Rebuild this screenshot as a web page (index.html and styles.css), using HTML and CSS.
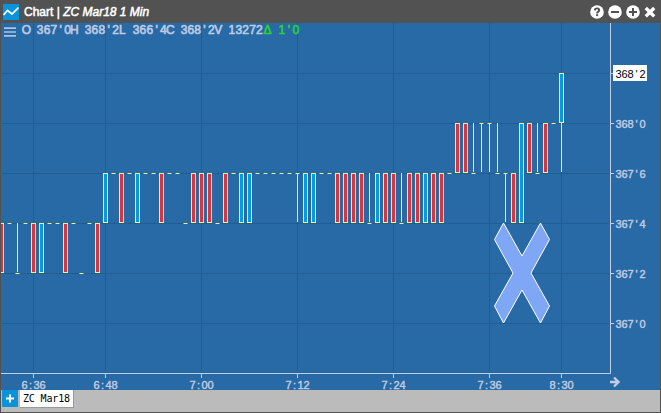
FILE: index.html
```html
<!DOCTYPE html>
<html lang="en">
<head>
<meta charset="utf-8">
<title>Chart</title>
<link rel="stylesheet" href="styles.css">
</head>
<body>
<div class="window">
  <header class="titlebar">
    <svg class="logo" width="16" height="16" viewBox="0 0 16 16"><rect width="16" height="16" fill="#0a93d8"/><path d="M.5 11 4.5 6.5l4.5 3.5 6.5-6.5" fill="none" stroke="#fff" stroke-width="1.7"/></svg>
    <h1 class="title">Chart | <em>ZC Mar18 1 Min</em></h1>
    <div class="controls">
      <svg width="14" height="14" viewBox="0 0 14 14"><circle cx="7" cy="7" r="6.8" fill="#fff"/><path d="M4.8 5.4C4.9 3.9 5.8 3.4 7 3.4c1.3 0 2.2.7 2.2 1.8C9.2 6.7 7.1 6.6 7.1 8.4" fill="none" stroke="#525252" stroke-width="1.9"/><rect x="6.1" y="9.2" width="2" height="1.9" fill="#525252"/></svg>
      <svg width="14" height="14" viewBox="0 0 14 14"><circle cx="7" cy="7" r="6.8" fill="#fff"/><path d="M3 7h8" stroke="#525252" stroke-width="2"/></svg>
      <svg width="14" height="14" viewBox="0 0 14 14"><circle cx="7" cy="7" r="6.8" fill="#fff"/><path d="M3 7h8M7 3v8" stroke="#525252" stroke-width="2"/></svg>
      <svg class="close" width="12" height="14" viewBox="0 0 12 14"><path d="m1.8 3 8.4 8.4M10.2 3l-8.4 8.4" stroke="#fff" stroke-width="3.4"/></svg>
    </div>
  </header>
  <main class="chart">
    <svg id="plot" width="659" height="367" viewBox="1 23 659 367"></svg>
  </main>
  <footer class="tabs">
    <button class="add" aria-label="Add"><svg width="16" height="17" viewBox="0 0 16 17"><path d="M4 8.5h8M8 4.5v8" stroke="#fff" stroke-width="2"/></svg></button>
    <div class="tab">ZC Mar18</div>
  </footer>
</div>
<script src="chart.js"></script>
</body>
</html>
```
FILE: styles.css
```css
* { box-sizing: border-box; }
body { margin: 0; background: #525252; font-family: "Liberation Sans", Arial, sans-serif; }
.window { width: 661px; height: 413px; display: flex; flex-direction: column; padding: 0 1px 1px; background: #525252; }
.titlebar { height: 23px; flex: none; display: flex; align-items: center; padding: 0 4px 0 2px; }
.logo { flex: none; }
.title { margin: 0 0 0 5px; font-size: 12px; line-height: 24px; font-weight: 400; color: #fff; white-space: pre; -webkit-text-stroke: .5px #fff; }
.controls { margin-left: auto; display: flex; gap: 4px; align-items: center; }
.controls svg { display: block; }
.chart { height: 367px; flex: none; background: #276aa5; }
.chart svg { display: block; }
.tabs { flex: 1; display: flex; align-items: flex-start; gap: 2px; padding-left: 1px; background: #bbb; }
.add { width: 16px; height: 17px; padding: 0; border: 0; background: #0a93d8; }
.add svg { display: block; }
.tab { height: 18px; width: 54px; padding-left: 3px; background: #fff; border-right: 1px solid #999; border-bottom: 1px solid #999; color: #000; font: 10px/17px "DejaVu Sans Mono", monospace; letter-spacing: -.15px; white-space: nowrap; }
.grid { stroke: #205d91; }
.axis { stroke: #c3cde6; fill: none; }
.candle { stroke: #f4f184; }
.up { fill: #0a9ada; }
.down { fill: #dc3539; }
.wick { stroke: #f4f184; fill: none; }
.soft { stroke: #f4f184; opacity: .5; }
.legend, .label { fill: #bfc9e2; stroke: #bfc9e2; text-anchor: middle; }
.legend { font-size: 12px; stroke-width: .65px; }
.label { font-size: 11px; stroke-width: .45px; }
.legend.change { fill: #2bcf35; stroke: #2bcf35; }
.last { fill: #000; font-size: 11px; text-anchor: middle; }
.tag { fill: #fff; }
.menu { stroke: #adc3df; stroke-width: 1.7px; }
.marker { fill: #80a7f6; stroke: #fff; }
```
FILE: chart.js
```js
const NS = 'http://www.w3.org/2000/svg';
const plot = document.getElementById('plot');

function add(name, attrs, text) {
  const el = document.createElementNS(NS, name);
  for (const key in attrs) el.setAttribute(key, attrs[key]);
  if (text) el.textContent = text;
  plot.appendChild(el);
  return el;
}

// Text set on fixed character cells.
function cells(text, x, y, step, cls) {
  const xs = [...text].map((c, i) => (x + (i + 0.5) * step).toFixed(2)).join(' ');
  add('text', { x: xs, y, class: cls, 'xml:space': 'preserve' }, text);
}

const times = [[33, '6:36'], [105, '6:48'], [201, '7:00'], [297, '7:12'], [393, '7:24'], [489, '7:36'], [561, '8:30']];
const prices = [[73, ''], [123, "368'0"], [173, "367'6"], [223, "367'4"], [273, "367'2"], [323, "367'0"]];

for (const [x] of times) add('path', { d: `M${x + .5} 23V373`, class: 'grid' });
for (const [y] of prices) add('path', { d: `M2 ${y + .5}H609`, class: 'grid' });
add('path', { d: 'M1 373.5H610.5V23', class: 'axis' });
for (const [x, t] of times) {
  add('path', { d: `M${x + .5} 374v4`, class: 'axis' });
  cells(t, x - 11.5, 389, 6, 'label');
}
for (const [y, t] of prices) {
  add('path', { d: `M611 ${y + .5}h3`, class: 'axis' });
  if (t) cells(t, 615.5, y + 5, 6, 'label');
}

// r/b/B: falling, rising and tall rising body, d: flat bar, t/l: wick with its tick at top/bottom.
const series = [
  [0, 223, 'rdldrbddrd'], [10, 273, 'd'], [11, 223, 'dr'],
  [13, 173, 'bdrdbddrdd'], [23, 223, 'd'], [24, 173, 'rrr'], [27, 223, 'd'],
  [28, 173, 'rdbbdddddtbbddrrrrlbrrlrrbrrd'],
  [57, 123, 'rrlttl'], [63, 173, 'tr'], [65, 123, 'Brlrd'], [70, 73, 'bw']
];
for (const [start, top, kinds] of series) {
  [...kinds].forEach((k, i) => {
    const x = 1 + 8 * (start + i);
    if ('rbB'.includes(k)) {
      add('rect', { x: x - 1.5, y: top + .5, width: 4, height: k === 'B' ? 99 : 49, class: 'candle ' + (k === 'r' ? 'down' : 'up') });
    } else if (k === 'w') {
      add('path', { d: `M${x - 7.5} 123V172`, class: 'wick' });
    } else {
      const y = k === 'l' ? top + 50.5 : top + .5;
      if (k !== 'd') add('path', { d: `M${x + .5} ${top}v49`, class: 'wick' });
      add('path', { d: `M${x - 2} ${y}h5`, class: 'soft' });
      add('path', { d: `M${x - 1} ${y}h3`, class: 'wick' });
    }
  });
}

add('polygon', { points: '503.5,223 522,256 540.5,223 549.5,239.5 531,273 549.5,306 540.5,323 522,290 503.5,323 494.5,306 513,273 494.5,239.5', class: 'marker' });
add('rect', { x: 613, y: 65, width: 34, height: 16, class: 'tag' });
cells("368'2", 615.5, 78, 6, 'last');
add('path', { d: 'M4 28.2h12M4 32h12M4 35.8h12', class: 'menu' });
cells("O 367'0H 368'2L 366'4C 368'2V 13272", 23, 34, 6.85, 'legend');
cells("Δ 1'0", 264, 34, 7.1, 'legend change');
add('path', { d: 'M610 382h8.5M614 377.5l4.5 4.5-4.5 4.5', class: 'axis', 'stroke-width': 2.4 });
```
